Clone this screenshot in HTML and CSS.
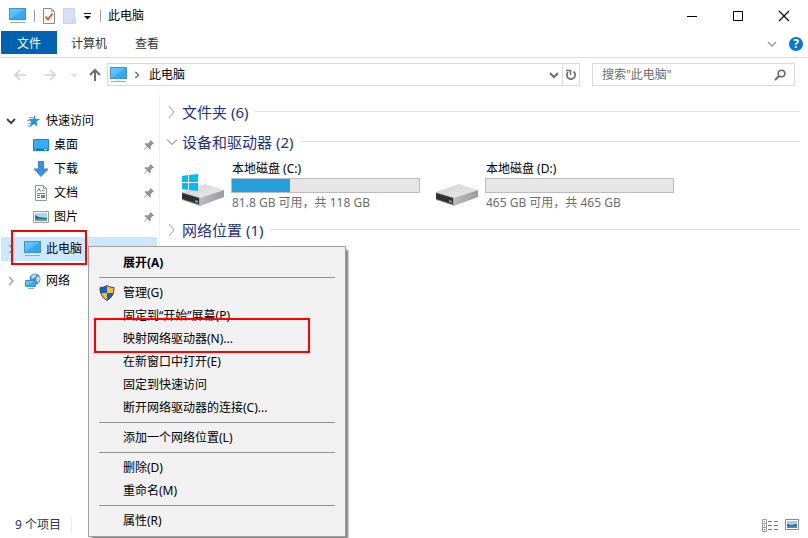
FILE: index.html
```html
<!DOCTYPE html>
<html lang="zh-CN">
	<head>
		<meta charset="utf-8">
		<title>此电脑</title>
		<link rel="stylesheet" href="styles.css">
	</head>
	<body>
		<svg class="defs" width="0" height="0" aria-hidden="true">
			<linearGradient id="screen" x1="0" y1="0" x2="1" y2="1">
				<stop offset="0" stop-color="#6fcbff"/>
				<stop offset="0.5" stop-color="#4dbcfb"/>
				<stop offset="0.51" stop-color="#34adf8"/>
				<stop offset="1" stop-color="#2ba5f3"/>
			</linearGradient>
			<linearGradient id="drive-top" x1="0" y1="0" x2="1" y2="1">
				<stop offset="0" stop-color="#d2d2d5"/>
				<stop offset="1" stop-color="#ececef"/>
			</linearGradient>
			<linearGradient id="drive-side" x1="0" y1="0" x2="1" y2="0">
				<stop offset="0" stop-color="#bcbcbf"/>
				<stop offset="1" stop-color="#9c9c9f"/>
			</linearGradient>
			<symbol id="pc" viewBox="0 0 17 16">
				<rect x="0.5" y="0.5" width="16" height="11" fill="url(#screen)" stroke="#4a8fbf"/>
				<path d="M7 12h3v2H7z" fill="#e2edf4"/>
				<path d="M1 14.5h15" stroke="#8fb0c4"/>
			</symbol>
			<symbol id="pin" viewBox="0 0 12 12">
				<path d="M7.5 1L11 4.500L10 5.500L9.500 5L7.500 7.500L8 9.500L7 10.500L4.500 8L1.500 11L1 10.500L4 7.500L1.500 5L2.500 4L5 4.500L7 2.500L6.500 2z" fill="#8794a3"/>
			</symbol>
			<symbol id="drive" viewBox="0 0 44 34">
				<path d="M1 18L24 10L43 16L20 24z" fill="url(#drive-top)"/>
				<path d="M19 24L43 16V23L19 32z" fill="url(#drive-side)"/>
				<path d="M1 18L19 23.500V32L1 26z" fill="#a9a9ab"/>
				<path d="M1 19L18 24V30.500L1 25z" fill="#303132"/>
				<path d="M14 26l3 1v2l-3-1z" fill="#3fd83d"/>
			</symbol>
			<symbol id="chevron" viewBox="0 0 10 10">
				<path d="M3 1l4 4-4 4" fill="none" stroke="currentColor" stroke-width="1.500"/>
			</symbol>
			<symbol id="chevron-down" viewBox="0 0 10 10">
				<path d="M1 3l4 4 4-4" fill="none" stroke="currentColor" stroke-width="2"/>
			</symbol>
		</svg>

		<div class="window">
			<header class="titlebar">
				<svg class="pc-icon" width="17" height="16"><use href="#pc"/></svg>
				<span class="bar"></span>
				<button class="icon-button" aria-label="属性">
					<svg width="12" height="16" viewBox="0 0 12 16">
						<path d="M0.500 0.500h8l3 3v12h-11z" fill="#fafafa" stroke="#8a8a8a"/>
						<path d="M8.500 0.500v3h3" fill="none" stroke="#aaa"/>
						<path d="M2.500 8.500l2.500 3 4.500-6" fill="none" stroke="#e8531f" stroke-width="1.800"/>
					</svg>
				</button>
				<button class="icon-button" aria-label="新建文件夹">
					<svg width="13" height="16" viewBox="0 0 13 16">
						<path d="M0.500 0.500h11v10h1v5h-12z" fill="#d6e2f4" stroke="#c5d4ea"/>
						<path d="M9.500 15v-4h2" fill="none" stroke="#bccde6"/>
					</svg>
				</button>
				<button class="icon-button" aria-label="自定义快速访问工具栏">
					<svg width="8" height="8" viewBox="0 0 8 8"><path d="M0 1.500h7" stroke="#111"/><path d="M0 4h7L3.500 7.500z" fill="#111"/></svg>
				</button>
				<span class="bar"></span>
				<h1 class="title">此电脑</h1>
				<div class="window-buttons">
					<button aria-label="最小化"><svg width="12" height="12"><path d="M1 6.500h10" stroke="#000"/></svg></button>
					<button aria-label="最大化"><svg width="12" height="12"><path d="M1.500 1.500h9v9h-9z" fill="none" stroke="#000"/></svg></button>
					<button aria-label="关闭"><svg width="12" height="12"><path d="M1 1l10 10M11 1L1 11" stroke="#000" stroke-width="1.200"/></svg></button>
				</div>
			</header>

			<nav class="tabs">
				<button class="tab active">文件</button>
				<button class="tab">计算机</button>
				<button class="tab">查看</button>
				<div class="ribbon-tools">
					<button class="icon-button expand" aria-label="展开功能区"><svg width="10" height="10" viewBox="0 0 10 10"><path d="M1 3l4 4 4-4" fill="none" stroke="currentColor" stroke-width="1.300"/></svg></button>
					<button class="help" aria-label="帮助">?</button>
				</div>
			</nav>

			<div class="toolbar">
				<div class="history">
					<button class="icon-button" aria-label="后退"><svg width="12" height="12"><path d="M12 6H1M6 1L1 6l5 5" fill="none" stroke="#d2d2d2" stroke-width="1.600"/></svg></button>
					<button class="icon-button" aria-label="前进"><svg width="12" height="12"><path d="M0 6h11M6 1l5 5-5 5" fill="none" stroke="#d2d2d2" stroke-width="1.600"/></svg></button>
					<button class="icon-button recent" aria-label="最近浏览的位置"><svg width="6" height="6"><use href="#chevron-down"/></svg></button>
					<button class="icon-button" aria-label="上移"><svg width="12" height="14"><path d="M6 13V2M1 7l5-5 5 5" fill="none" stroke="#6d6d6d" stroke-width="2"/></svg></button>
				</div>
				<div class="address">
					<svg class="pc-icon" width="17" height="16"><use href="#pc"/></svg>
					<svg class="crumb-arrow" width="8" height="8"><use href="#chevron"/></svg>
					<a class="crumb" href="#">此电脑</a>
					<button class="icon-button history-drop" aria-label="以前的位置"><svg width="10" height="10"><use href="#chevron-down"/></svg></button>
					<button class="refresh" aria-label="刷新">
						<svg width="12" height="12" viewBox="0 0 12 12"><path d="M8.500 2.500A4.200 4.200 0 1 1 3 3" fill="none" stroke="#6d6d6d" stroke-width="1.700"/><path d="M1 1.500h4.500V6" fill="none" stroke="#6d6d6d" stroke-width="1.500"/></svg>
					</button>
				</div>
				<form class="search">
					<input type="search" placeholder='搜索"此电脑"' aria-label="搜索此电脑">
					<svg width="12" height="12" viewBox="0 0 12 12"><circle cx="7.500" cy="4.500" r="3.300" fill="none" stroke="#666" stroke-width="1.600"/><path d="M5 7L1 11" stroke="#666" stroke-width="2"/></svg>
				</form>
			</div>

			<div class="main">
				<nav class="sidebar">
					<div class="branch">
						<a class="node" href="#">
							<svg class="twisty open" width="10" height="10"><use href="#chevron-down"/></svg>
							<svg class="node-icon" width="17" height="16" viewBox="0 0 17 16"><path d="M10.500 2l1.200 4H16l-3.500 2.700 1 5L10 11l-4.500 3.500L7.300 9.500 4.500 6H9z" fill="#2490e0"/><path d="M5 4.500h4M3 7.500h4M4 10.500h3M3 13h3" stroke="#5bb0ea"/></svg>
							快速访问
						</a>
						<a class="node child" href="#">
							<svg class="node-icon" width="16" height="16"><path d="M0.500 2.500h15v11H0.500z" fill="#35adfb" stroke="#1683d6"/><path d="M1 11.500h14v2H1z" fill="#1574bf"/><path d="M2 12.500h1M11 12.500h3" stroke="#fff"/></svg>
							桌面
							<svg class="pin" width="12" height="12"><use href="#pin"/></svg>
						</a>
						<a class="node child" href="#">
							<svg class="node-icon" width="16" height="16"><path d="M5.500 0.500h5V8h4.500L8 15.500 1 8h4.500z" fill="#3b91e0" stroke="#3585d3"/></svg>
							下载
							<svg class="pin" width="12" height="12"><use href="#pin"/></svg>
						</a>
						<a class="node child" href="#">
							<svg class="node-icon" width="16" height="16"><path d="M2.500 0.500h8l3 3v12h-11z" fill="#fff" stroke="#8d979e"/><path d="M10.500 0.500v3h3" fill="none" stroke="#8d979e"/><path d="M4 6.500l2-3 1.500 3M9 5.500h2M4 8.500h8M4 10.500h3M4 12.500h3" fill="none" stroke="#3d89c5"/><path d="M8 10h4v3H8z" fill="#4387b5"/></svg>
							文档
							<svg class="pin" width="12" height="12"><use href="#pin"/></svg>
						</a>
						<a class="node child" href="#">
							<svg class="node-icon" width="16" height="16"><path d="M0.500 2.500h15v11H0.500z" fill="#fff" stroke="#979da2"/><path d="M2 4h12v8H2z" fill="#a8d8f8"/><path d="M2 6l4 2 8 1v1H2z" fill="#386d7b"/><path d="M2 10h12v2H2z" fill="#5a9ccb"/></svg>
							图片
							<svg class="pin" width="12" height="12"><use href="#pin"/></svg>
						</a>
					</div>
					<div class="branch">
						<a class="node selected" href="#">
							<svg class="twisty" width="10" height="10"><use href="#chevron"/></svg>
							<svg class="node-icon" width="17" height="16"><use href="#pc"/></svg>
							此电脑
						</a>
					</div>
					<div class="branch">
						<a class="node" href="#">
							<svg class="twisty" width="10" height="10"><use href="#chevron"/></svg>
							<svg class="node-icon" width="17" height="16" viewBox="0 0 17 16"><circle cx="11" cy="6" r="5.500" fill="#4f8fb9"/><path d="M7.500 3l3-2 2 1-2 3-3 1zM12.500 4l3-.5.5 3-2 3-2-2z" fill="#b9ddf0"/><path d="M1.500 7.500h10v6h-10z" fill="url(#screen)" stroke="#3a8fc9"/><path d="M4 15.500h6" stroke="#8db6d2"/></svg>
							网络
						</a>
					</div>
				</nav>

				<main class="content">
					<section class="group">
						<h2 class="group-title"><svg class="group-arrow" width="12" height="12" viewBox="0 0 12 12"><path d="M3 0l5 6-5 6" fill="none" stroke="#999"/></svg>文件夹 (6)</h2>
					</section>
					<section class="group">
						<h2 class="group-title"><svg class="group-arrow" width="12" height="12" viewBox="0 0 12 12"><path d="M1 3.500l5 5 5-5" fill="none" stroke="#666"/></svg>设备和驱动器 (2)</h2>
						<div class="drives">
							<a class="drive" href="#">
								<svg class="drive-icon" width="44" height="34">
									<use href="#drive"/>
									<path d="M1 2l6-1v7H1zM8 1l9-1v8H8zM1 9h6v7l-6-1zM8 9h9v8l-9-1z" fill="#00bcf2"/>
								</svg>
								<span class="drive-info">
									<span class="drive-name">本地磁盘 (C:)</span>
									<span class="usage"><span class="used" style="width: 31%"></span></span>
									<span class="space">81.8 GB 可用，共 118 GB</span>
								</span>
							</a>
							<a class="drive" href="#">
								<svg class="drive-icon" width="44" height="34"><use href="#drive"/></svg>
								<span class="drive-info">
									<span class="drive-name">本地磁盘 (D:)</span>
									<span class="usage"></span>
									<span class="space">465 GB 可用，共 465 GB</span>
								</span>
							</a>
						</div>
					</section>
					<section class="group">
						<h2 class="group-title"><svg class="group-arrow" width="12" height="12" viewBox="0 0 12 12"><path d="M3 0l5 6-5 6" fill="none" stroke="#999"/></svg>网络位置 (1)</h2>
					</section>
				</main>
			</div>

			<footer class="status">
				<span class="count">9 个项目</span>
				<div class="views">
					<button class="icon-button" aria-label="详细信息">
						<svg width="16" height="13"><path d="M0.500 0.500h4v12h-4zM0.500 4.500h4M0.500 8.500h4" fill="none" stroke="#999"/><path d="M2 2.500h1" stroke="#3a8a4e"/><path d="M2 6.500h1" stroke="#2a7de0"/><path d="M2 10.500h1" stroke="#e02020"/><path d="M6 2.500h4M12 2.500h4M6 6.500h4M12 6.500h4M6 10.500h4M12 10.500h4" stroke="#777"/></svg>
					</button>
					<button class="icon-button" aria-label="大图标">
						<svg width="14" height="12"><path d="M0.500 0.500h13v10h-13z" fill="#fff" stroke="#888"/><path d="M2 2h10v7H2z" fill="#9ccdf5"/><path d="M2 5l4 1 6-1v2H2z" fill="#35705c"/><path d="M2 7h10v2H2z" fill="#4a86c4"/></svg>
					</button>
				</div>
			</footer>
		</div>

		<div class="menu" role="menu">
			<button class="menu-item default" role="menuitem">展开(A)</button>
			<hr>
			<button class="menu-item" role="menuitem">
				<svg class="shield" width="16" height="16" viewBox="0 0 16 16"><path d="M8 0.500Q10.500 2.500 15 2.500Q15.500 11 8 15.500Q0.500 11 1 2.500Q5.500 2.500 8 0.500z" fill="#fdb926"/><path d="M8 0.500V8H1.300Q1 5 1 2.500Q5.500 2.500 8 0.500zM8 8h6.700Q13.500 12.500 8 15.500z" fill="#0f63c4"/><path d="M8 0.500Q10.500 2.500 15 2.500Q15.500 11 8 15.500Q0.500 11 1 2.500Q5.500 2.500 8 0.500z" fill="none" stroke="#4a4a4a"/></svg>
				管理(G)
			</button>
			<button class="menu-item" role="menuitem">固定到“开始”屏幕(P)</button>
			<button class="menu-item" role="menuitem">映射网络驱动器(N)...</button>
			<button class="menu-item" role="menuitem">在新窗口中打开(E)</button>
			<button class="menu-item" role="menuitem">固定到快速访问</button>
			<button class="menu-item" role="menuitem">断开网络驱动器的连接(C)...</button>
			<hr>
			<button class="menu-item" role="menuitem">添加一个网络位置(L)</button>
			<hr>
			<button class="menu-item" role="menuitem">删除(D)</button>
			<button class="menu-item" role="menuitem">重命名(M)</button>
			<hr>
			<button class="menu-item" role="menuitem">属性(R)</button>
		</div>
		<div class="callout callout-pc"></div>
		<div class="callout callout-map"></div>
	</body>
</html>
```
FILE: styles.css
```css
* {
	box-sizing: border-box;
}
body {
	background-color: #fff;
	color: #000;
	font: 12px/16px "Noto Sans", "Noto Sans CJK SC", sans-serif;
	margin: 0;
}
button, input {
	background: none;
	border: 0;
	color: inherit;
	font: inherit;
	padding: 0;
}
a {
	color: inherit;
	text-decoration: none;
}
h1, h2 {
	font-size: 12px;
	font-weight: normal;
	margin: 0;
}
svg {
	display: block;
	flex: none;
}
.defs {
	position: absolute;
}
.window {
	display: flex;
	flex-direction: column;
	min-height: 100vh;
}
.icon-button {
	align-items: center;
	display: flex;
	justify-content: center;
}

/* title bar */
.titlebar {
	align-items: center;
	display: flex;
	gap: 8px;
	height: 31px;
	padding: 0 1px 0 9px;
}
.bar {
	background-color: #999;
	height: 12px;
	width: 1px;
}
.titlebar .title {
	margin-left: -1px;
}
.window-buttons {
	display: flex;
	margin-left: auto;
}
.window-buttons button {
	display: grid;
	height: 31px;
	place-items: center;
	width: 46px;
}

/* ribbon tabs */
.tabs {
	border-bottom: 1px solid #dadbdc;
	display: flex;
	height: 27px;
	padding: 0 5px 3px 1px;
}
.tab {
	color: #333;
	height: 23px;
	padding: 2px 14px 0;
}
.tab.active {
	background-color: #0063b1;
	color: #fff;
	padding: 2px 16px 0;
}
.ribbon-tools {
	align-items: center;
	display: flex;
	gap: 12px;
	margin: 3px 0 0 auto;
}
.expand {
	color: #999;
}
.help {
	background-color: #0078d7;
	border-radius: 50%;
	color: #fff;
	font-weight: bold;
	height: 14px;
	line-height: 14px;
	width: 14px;
}

/* address row */
.toolbar {
	display: flex;
	height: 36px;
	padding: 5px 13px 8px 14px;
}
.history {
	align-items: center;
	display: flex;
	gap: 18px;
	padding-right: 6px;
}
.history .recent {
	color: #ccc;
	margin: 0 -6px 0 -3px;
}
.address {
	align-items: center;
	border: 1px solid #d9d9d9;
	display: flex;
	flex: 1;
	padding-left: 2px;
}
.crumb-arrow {
	color: #555;
	margin: 0 8px 0 6px;
}
.crumb {
	flex: 1;
}
.history-drop {
	color: #6d6d6d;
	padding: 0 3px;
}
.refresh {
	align-self: stretch;
	border-left: 1px solid #d9d9d9;
	display: grid;
	place-items: center;
	width: 17px;
}
.search {
	align-items: center;
	border: 1px solid #d9d9d9;
	display: flex;
	margin-left: 12px;
	padding: 0 8px 0 9px;
	width: 26%;
}
.search input {
	flex: 1;
	min-width: 0;
	outline: 0;
}
.search input::placeholder {
	color: #6d6d6d;
}

/* body */
.main {
	display: flex;
	flex: 1;
}
.sidebar {
	border-right: 1px solid #f0f0f0;
	display: flex;
	flex-direction: column;
	gap: 8px;
	padding: 15px 2px 0 1px;
	width: 160px;
}
.node {
	align-items: center;
	display: flex;
	height: 24px;
	padding-left: 5px;
}
.node.child {
	padding-left: 32px;
}
.node.selected {
	background-color: #cce8ff;
}
.node-icon {
	margin-right: 5px;
}
.twisty {
	color: #a0a0a0;
	margin-right: 8px;
}
.twisty.open {
	color: #444;
}
.pin {
	margin-left: auto;
	margin-right: 2px;
}
.content {
	flex: 1;
	padding: 3px 8px 0 6px;
}
.group-title {
	align-items: center;
	color: #1e3287;
	display: flex;
	font-size: 15px;
	height: 30px;
	line-height: 20px;
	padding-bottom: 1px;
}
.group-title::after {
	background-color: #e2e2e2;
	content: "";
	flex: 1;
	height: 1px;
	margin-left: 7px;
}
.group-arrow {
	margin-right: 4px;
}
.drives {
	display: flex;
	flex-wrap: wrap;
	padding: 2px 0 2px 15px;
}
.drive {
	display: flex;
	height: 54px;
	width: 254px;
}
.drive-icon {
	margin: 15px 6px 0 0;
}
.drive-info {
	display: flex;
	flex-direction: column;
	width: 189px;
}
.drive-name, .space {
	padding-left: 1px;
}
.drive-name {
	height: 19px;
	line-height: 20px;
}
.usage {
	background-color: #e6e6e6;
	border: 1px solid #bcbcbc;
	height: 15px;
}
.used {
	background-color: #26a0da;
	display: block;
	height: 100%;
}
.space {
	color: #6d6d6d;
	line-height: 20px;
}

/* status bar */
.status {
	align-items: center;
	color: #1e395b;
	display: flex;
	height: 26px;
	justify-content: space-between;
	padding: 0 9px 0 15px;
}
.count {
	border-right: 1px solid #e8e8e8;
	padding-right: 10px;
}
.views {
	display: flex;
	gap: 7px;
}

/* context menu */
.menu {
	background-color: #f1f1f1;
	border: 1px solid #a0a0a0;
	box-shadow: 3px 3px 2px -1px #777;
	left: 88px;
	padding: 4px 10px;
	position: absolute;
	top: 246px;
	width: 258px;
}
.menu hr {
	background-color: #919191;
	border: 0;
	height: 1px;
	margin: 3px 0;
}
.menu-item {
	align-items: center;
	display: flex;
	height: 23px;
	padding-left: 24px;
	white-space: nowrap;
	width: 100%;
}
.menu-item.default {
	font-weight: bold;
}
.shield {
	margin: 0 8px 0 -24px;
}

/* red markers */
.callout {
	border: 2px solid #f00;
	pointer-events: none;
	position: absolute;
}
.callout-pc {
	height: 35px;
	left: 11px;
	top: 230px;
	width: 76px;
}
.callout-map {
	height: 35px;
	left: 94px;
	top: 318px;
	width: 216px;
}
```
